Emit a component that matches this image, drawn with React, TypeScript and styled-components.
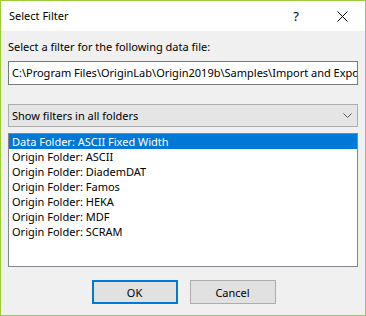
import { FC } from 'react';
import styled, { createGlobalStyle } from 'styled-components';

const GlobalStyle = createGlobalStyle`
  html, body {
    margin: 0;
    padding: 0;
    background: #f0f0f0;
  }
  * {
    box-sizing: border-box;
  }
`

const items = [
  'Data Folder: ASCII Fixed Width',
  'Origin Folder: ASCII',
  'Origin Folder: DiademDAT',
  'Origin Folder: Famos',
  'Origin Folder: HEKA',
  'Origin Folder: MDF',
  'Origin Folder: SCRAM',
]

const App: FC = () => {
  return (
    <>
      <GlobalStyle />
      <WindowSC>
        <TitleBarSC>
          <TitleSC>Select Filter</TitleSC>
          <TitleButtonSC>?</TitleButtonSC>
          <TitleButtonSC>
            <svg width="11" height="11" viewBox="0 0 11 11">
              <path d="M0.5 0.5 L10.5 10.5 M10.5 0.5 L0.5 10.5" stroke="#000" strokeWidth="1" fill="none" />
            </svg>
          </TitleButtonSC>
        </TitleBarSC>
        <BodySC>
          <LabelSC>Select a filter for the following data file:</LabelSC>
          <PathBoxSC>C:\Program Files\OriginLab\Origin2019b\Samples\Import and Export\</PathBoxSC>
          <ComboSC>
            <span>Show filters in all folders</span>
            <svg width="9" height="5" viewBox="0 0 9 5">
              <path d="M0.5 0.5 L4.5 4.5 L8.5 0.5" stroke="#555" strokeWidth="1" fill="none" />
            </svg>
          </ComboSC>
          <ListSC>
            {items.map((item, index) => (
              <ListItemSC key={index} selected={index === 0}>{item}</ListItemSC>
            ))}
          </ListSC>
          <ButtonRowSC>
            <ButtonSC primary>OK</ButtonSC>
            <ButtonSC>Cancel</ButtonSC>
          </ButtonRowSC>
        </BodySC>
      </WindowSC>
    </>
  );
};

export default App;

const font = `"Noto Sans", "Liberation Sans", sans-serif`

const WindowSC = styled('div')`
  width: 366px;
  height: 316px;
  border: 1px solid #9ecb3e;
  background-color: #f0f0f0;
  display: flex;
  flex-direction: column;
  font-family: ${font};
  font-size: 11px;
  color: #000;
  overflow: hidden;
`

const TitleBarSC = styled('div')`
  height: 30px;
  flex-shrink: 0;
  background-color: #fff;
  display: flex;
  align-items: center;
  padding-left: 8px;
`

const TitleSC = styled('div')`
  flex: 1;
  font-size: 11px;
  line-height: 16px;
  margin-top: -1px;
`

const TitleButtonSC = styled('div')`
  width: 46px;
  height: 30px;
  display: flex;
  align-items: center;
  justify-content: center;
  font-size: 13px;
`

const BodySC = styled('div')`
  flex: 1;
  display: flex;
  flex-direction: column;
  padding: 8px 7px 0 7px;
`

const LabelSC = styled('div')`
  line-height: 16px;
  height: 16px;
`

const PathBoxSC = styled('div')`
  margin-top: 6px;
  height: 24px;
  border: 1px solid #7a7a7a;
  background-color: #fff;
  padding: 0 3px;
  line-height: 22px;
  white-space: nowrap;
  overflow: hidden;
`

const ComboSC = styled('div')`
  margin-top: 19px;
  height: 23px;
  border: 1px solid #adadad;
  background-color: #e5e5e5;
  display: flex;
  align-items: center;
  justify-content: space-between;
  padding: 0 5px 0 3px;
  line-height: 21px;
`

const ListSC = styled('div')`
  margin-top: 6px;
  height: 134px;
  border: 1px solid #828790;
  background-color: #fff;
  padding: 0;
`

const ListItemSC = styled('div') <{ selected?: boolean }>`
  height: 15px;
  line-height: 15px;
  padding-left: 3px;
  white-space: nowrap;
  background-color: ${p => p.selected ? '#0078d7' : 'transparent'};
  color: ${p => p.selected ? '#fff' : '#000'};
`

const ButtonRowSC = styled('div')`
  margin-top: 13px;
  display: flex;
  justify-content: center;
  gap: 12px;
  padding-left: 1px;
`

const ButtonSC = styled('div') <{ primary?: boolean }>`
  width: 86px;
  height: 24px;
  background-color: #e1e1e1;
  border: ${p => p.primary ? '2px solid #0078d7' : '1px solid #adadad'};
  display: flex;
  align-items: center;
  justify-content: center;
`
